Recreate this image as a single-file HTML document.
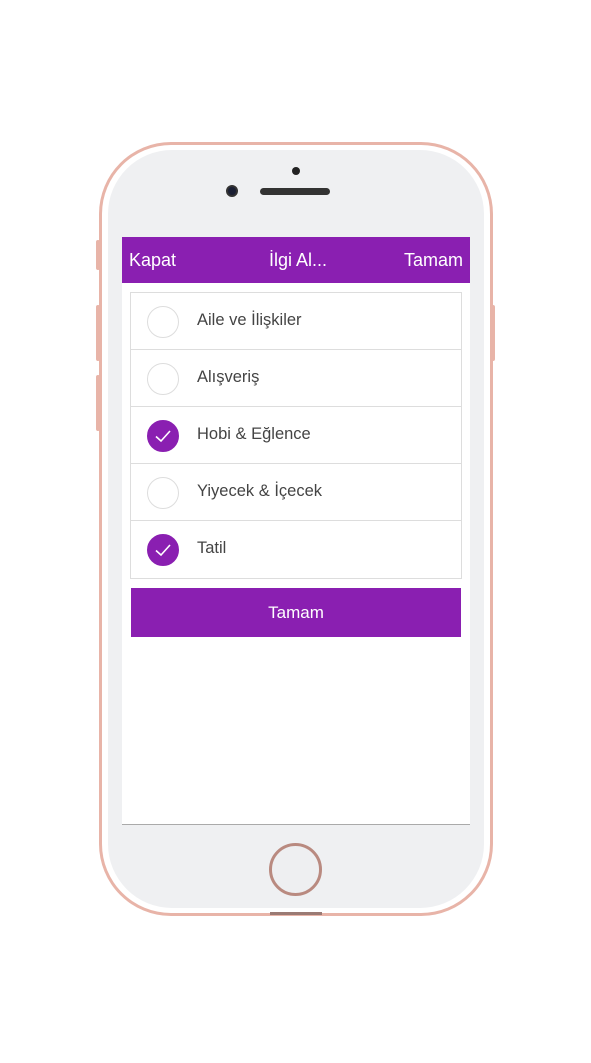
<!DOCTYPE html>
<html><head><meta charset="utf-8"><style>
*{margin:0;padding:0;box-sizing:border-box}
body{width:591px;height:1063px;background:#fff;position:relative;overflow:hidden;font-family:"Liberation Sans","DejaVu Sans",sans-serif}
.abs{position:absolute}
.phone{left:99px;top:142px;width:394px;height:774px;border-radius:72px;background:#e8b4a8;}
.phone2{left:102px;top:145px;width:388px;height:768px;border-radius:69px;background:#fff;}
.face{left:108px;top:150px;width:376px;height:758px;border-radius:64px;background:#eff0f2;}
.screen{left:122px;top:237px;width:348px;height:588px;background:#fff;border-bottom:1px solid #aaa;}
.hdr{left:122px;top:237px;width:348px;height:46px;background:#8a1fb1;color:#fff;font-size:18px;}
.hdr span{position:absolute;top:13px}
.list{left:130px;top:292px;width:332px;height:287px;border:1px solid #ddd;}
.row{position:absolute;left:0;width:330px;height:57px;border-bottom:1px solid #ddd;font-size:16.5px;color:#444}
.row .c{position:absolute;left:16px;top:13px;width:32px;height:32px;border-radius:50%;border:1px solid #ddd;background:#fff}
.row .c.on{background:#8a1fb1;border-color:#8a1fb1}
.row .t{position:absolute;left:66px;top:18px}
.btn{left:131px;top:588px;width:330px;height:49px;background:#8a1fb1;color:#fff;font-size:17px;text-align:center;line-height:49px}
.btnside{background:#e8b4a8;border-radius:2px}
</style></head><body>
<div class="abs btnside" style="left:96px;top:240px;width:4px;height:30px"></div>
<div class="abs btnside" style="left:96px;top:305px;width:4px;height:56px"></div>
<div class="abs btnside" style="left:96px;top:375px;width:4px;height:56px"></div>
<div class="abs btnside" style="left:491px;top:305px;width:4px;height:56px"></div>
<div class="abs phone"></div>
<div class="abs phone2"></div>
<div class="abs face"></div>
<div class="abs" style="left:292px;top:167px;width:8px;height:8px;border-radius:50%;background:#222"></div>
<div class="abs" style="left:226px;top:185px;width:12px;height:12px;border-radius:50%;background:#1a1f33;border:2px solid #333"></div>
<div class="abs" style="left:260px;top:188px;width:70px;height:7px;border-radius:4px;background:#333"></div>
<div class="abs screen"></div>
<div class="abs hdr"><span style="left:7px">Kapat</span><span style="left:147px">İlgi Al...</span><span style="right:7px">Tamam</span></div>
<div class="abs list">
<div class="row" style="top:0"><div class="c"></div><div class="t">Aile ve İlişkiler</div></div>
<div class="row" style="top:57px"><div class="c"></div><div class="t">Alışveriş</div></div>
<div class="row" style="top:114px"><div class="c on"><svg width="32" height="32" style="position:absolute;left:-1px;top:-1px"><path d="M9 16.5l5 4.5 9-10" stroke="#fff" stroke-width="1.6" fill="none"/></svg></div><div class="t">Hobi &amp; Eğlence</div></div>
<div class="row" style="top:171px"><div class="c"></div><div class="t">Yiyecek &amp; İçecek</div></div>
<div class="row" style="top:228px;border-bottom:none"><div class="c on"><svg width="32" height="32" style="position:absolute;left:-1px;top:-1px"><path d="M9 16.5l5 4.5 9-10" stroke="#fff" stroke-width="1.6" fill="none"/></svg></div><div class="t">Tatil</div></div>
</div>
<div class="abs btn">Tamam</div>
<div class="abs" style="left:269px;top:843px;width:53px;height:53px;border-radius:50%;border:3px solid #b98a80;background:#eeeff1"></div>
<div class="abs" style="left:270px;top:912px;width:52px;height:3px;background:#9a7a74"></div>
</body></html>
